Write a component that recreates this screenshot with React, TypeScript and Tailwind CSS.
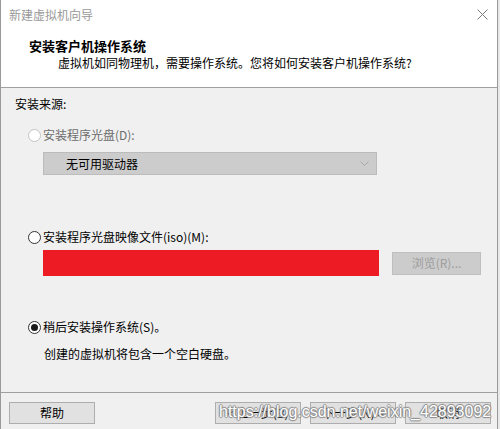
import type { ReactNode } from 'react'

const font = { fontFamily: '"Noto Sans CJK SC", "Liberation Sans", sans-serif' }

function Radio({ checked, disabled }: { checked?: boolean; disabled?: boolean }) {
  return (
    <span
      className={`flex h-[13px] w-[13px] items-center justify-center rounded-full border bg-white ${
        disabled ? 'border-[#c4c4c4]' : 'border-[#333333]'
      }`}
    >
      {checked && <span className="h-[7px] w-[7px] rounded-full bg-[#1a1a1a]" />}
    </span>
  )
}

function Btn({ children, className = '' }: { children: ReactNode; className?: string }) {
  return (
    <div
      className={`flex h-[22px] w-[86px] items-center justify-center border border-[#adadad] bg-[#e1e1e1] text-[12px] text-black ${className}`}
    >
      {children}
    </div>
  )
}

export default function App() {
  return (
    <div className="relative flex h-[429px] w-[500px] bg-[#e8e8e8] text-[12px] leading-[16px]" style={font}>
      <div className="flex h-full w-[498px] flex-col border-l border-r border-[#9b9b9b] bg-[#f0f0f0]">
        {/* title bar + header */}
        <div className="bg-white">
          <div className="flex h-[30px] items-center justify-between pl-[8px] pr-[9px]">
            <span className="text-[12px] text-[#999999]">新建虚拟机向导</span>
            <svg width="11" height="11" viewBox="0 0 11 11" className="mb-[1px]">
              <path d="M0.5 0.5 L10.5 10.5 M10.5 0.5 L0.5 10.5" stroke="#7a7a7a" strokeWidth="1" />
            </svg>
          </div>
          <div className="h-[57px] pt-[8px]">
            <div className="pl-[28px] text-[13px] font-bold text-black">安装客户机操作系统</div>
            <div className="mt-[1px] pl-[57px] text-black">
              虚拟机如同物理机，需要操作系统。您将如何安装客户机操作系统?
            </div>
          </div>
        </div>
        <div className="h-px bg-[#a0a0a0]" />

        {/* body */}
        <div className="flex flex-1 flex-col">
          <div className="mt-[8px] h-[16px] pl-[14px] text-black">安装来源:</div>

          <div className="mt-[15px] flex h-[16px] items-center gap-[2px] pl-[27px] text-[#6d6d6d]">
            <Radio disabled />
            <span>安装程序光盘(D):</span>
          </div>
          <div className="ml-[42px] mt-[9px] flex h-[23px] w-[334px] items-center justify-between border border-[#bcbcbc] bg-[#cccccc] pl-[22px] pr-[7px] text-black">
            <span>无可用驱动器</span>
            <svg width="9" height="6" viewBox="0 0 9 6">
              <path d="M0.5 0.5 L4.5 4.5 L8.5 0.5" stroke="#a8a8a8" fill="none" />
            </svg>
          </div>

          <div className="mt-[54px] flex h-[16px] items-center gap-[2px] pl-[27px] text-black">
            <Radio />
            <span>安装程序光盘映像文件(iso)(M):</span>
          </div>
          <div className="mt-[5px] flex h-[26px] items-center pl-[42px]">
            <div className="h-[26px] w-[336px] bg-[#ed1c24]" />
            <div className="ml-[13px] flex h-[23px] w-[89px] items-center justify-center border border-[#bfbfbf] bg-[#cccccc] text-[#9d9d9d]">
              浏览(R)...
            </div>
          </div>

          <div className="mt-[43px] flex h-[16px] items-center gap-[2px] pl-[27px] text-black">
            <Radio checked />
            <span>稍后安装操作系统(S)。</span>
          </div>
          <div className="mt-[11px] h-[16px] pl-[43px] text-black">创建的虚拟机将包含一个空白硬盘。</div>
        </div>

        {/* footer */}
        <div className="h-px bg-[#a0a0a0]" />
        <div className="flex h-[36px] items-start pt-[9px] pl-[8px] pr-[6px]">
          <Btn>帮助</Btn>
          <div className="flex-1" />
          <Btn>&lt; 上一步(B)</Btn>
          <Btn className="ml-[9px]">下一步(N) &gt;</Btn>
          <Btn className="ml-[9px]">取消</Btn>
        </div>
      </div>

      {/* watermark */}
      <div
        className="pointer-events-none absolute left-[219px] top-[402px] text-[16px] leading-[20px] text-white [text-shadow:1px_0_1px_#888,-1px_0_1px_#888,0_1px_1px_#888,0_-1px_1px_#888]"
        style={{ fontFamily: '"Liberation Sans", sans-serif' }}
      >
        https://blog.csdn.net/weixin_42893092
      </div>
    </div>
  )
}
